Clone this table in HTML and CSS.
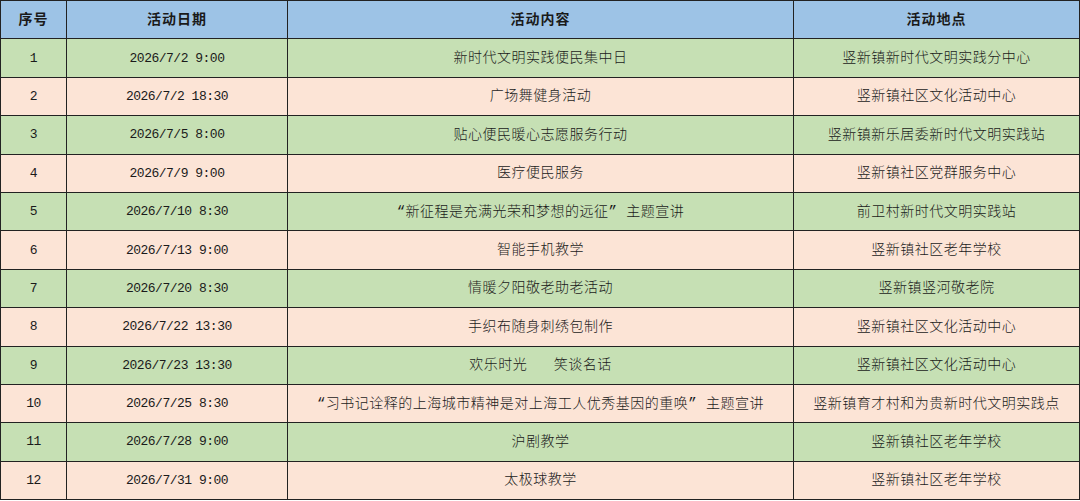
FILE: index.html
```html
<!DOCTYPE html>
<html lang="zh-CN">
<head>
<meta charset="utf-8">
<title>活动安排</title>
<link rel="stylesheet" href="styles.css">
</head>
<body>
<table class="schedule">
  <colgroup>
    <col class="c-no">
    <col class="c-date">
    <col class="c-content">
    <col class="c-place">
  </colgroup>
  <thead>
    <tr class="head"><th>序号</th><th>活动日期</th><th>活动内容</th><th>活动地点</th></tr>
  </thead>
  <tbody>
    <tr class="g"><td class="num">1</td><td class="num">2026/7/2 9:00</td><td>新时代文明实践便民集中日</td><td>竖新镇新时代文明实践分中心</td></tr>
    <tr class="p"><td class="num">2</td><td class="num">2026/7/2 18:30</td><td>广场舞健身活动</td><td>竖新镇社区文化活动中心</td></tr>
    <tr class="g"><td class="num">3</td><td class="num">2026/7/5 8:00</td><td>贴心便民暖心志愿服务行动</td><td>竖新镇新乐居委新时代文明实践站</td></tr>
    <tr class="p"><td class="num">4</td><td class="num">2026/7/9 9:00</td><td>医疗便民服务</td><td>竖新镇社区党群服务中心</td></tr>
    <tr class="g"><td class="num">5</td><td class="num">2026/7/10 8:30</td><td>“新征程是充满光荣和梦想的远征” 主题宣讲</td><td>前卫村新时代文明实践站</td></tr>
    <tr class="p"><td class="num">6</td><td class="num">2026/7/13 9:00</td><td>智能手机教学</td><td>竖新镇社区老年学校</td></tr>
    <tr class="g"><td class="num">7</td><td class="num">2026/7/20 8:30</td><td>情暖夕阳敬老助老活动</td><td>竖新镇竖河敬老院</td></tr>
    <tr class="p"><td class="num">8</td><td class="num">2026/7/22 13:30</td><td>手织布随身刺绣包制作</td><td>竖新镇社区文化活动中心</td></tr>
    <tr class="g"><td class="num">9</td><td class="num">2026/7/23 13:30</td><td>欢乐时光&nbsp;&nbsp;&nbsp;笑谈名话</td><td>竖新镇社区文化活动中心</td></tr>
    <tr class="p"><td class="num">10</td><td class="num">2026/7/25 8:30</td><td>“习书记诠释的上海城市精神是对上海工人优秀基因的重唤” 主题宣讲</td><td>竖新镇育才村和为贵新时代文明实践点</td></tr>
    <tr class="g"><td class="num">11</td><td class="num">2026/7/28 9:00</td><td>沪剧教学</td><td>竖新镇社区老年学校</td></tr>
    <tr class="p"><td class="num">12</td><td class="num">2026/7/31 9:00</td><td>太极球教学</td><td>竖新镇社区老年学校</td></tr>
  </tbody>
</table>
</body>
</html>
```

FILE: styles.css
```css
html, body {
  margin: 0;
  padding: 0;
  background: #ffffff;
}

.schedule {
  width: 1079px;
  height: 500px;
  border-collapse: collapse;
  table-layout: fixed;
  font-family: "Liberation Mono", "Noto Sans CJK SC", monospace;
  font-size: 14px;
  color: #1a1a1a;
}

.c-no { width: 66px; }
.c-date { width: 221px; }
.c-content { width: 506px; }
.c-place { width: 286px; }

.schedule th,
.schedule td {
  border: 1px solid #222222;
  text-align: center;
  vertical-align: middle;
  padding: 0;
  white-space: nowrap;
  letter-spacing: 0.5px;
  line-height: 1;
}

.schedule td {
  font-weight: 300;
}

.schedule tr {
  height: 38.4px;
}

.schedule th {
  font-weight: 700;
  letter-spacing: 1px;
}

.head { background: #9dc3e6; }
.g { background: #c6e0b4; }
.p { background: #fce4d6; }

.schedule td.num {
  font-size: 13px;
  letter-spacing: -0.5px;
}
```
